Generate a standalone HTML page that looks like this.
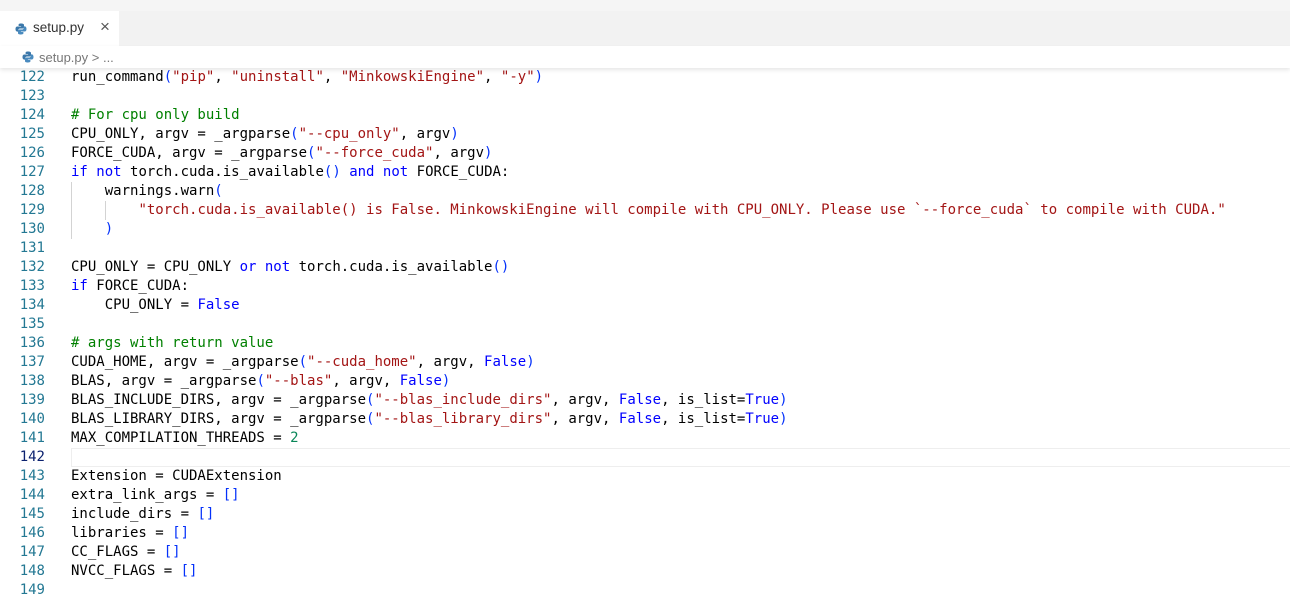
<!DOCTYPE html>
<html><head><meta charset="utf-8">
<style>
body{margin:0;width:1290px;height:590px;overflow:hidden;background:#fff;font-family:"Liberation Sans",sans-serif;position:relative}
#top{position:absolute;left:0;top:0;width:1290px;height:11px;background:#f5f5f5}
#tabs{position:absolute;left:0;top:11px;width:1290px;height:35px;background:#f2f2f2}
#tab{position:absolute;left:0;top:0;width:119px;height:35px;background:#fff}
#tab .name{position:absolute;left:33px;top:9px;font-size:13.5px;color:#333}
#tab .x{position:absolute;left:100px;top:6px;font-size:17px;color:#555;font-weight:300}
#bc{position:absolute;left:0;top:46px;width:1290px;height:22px;background:#fff;box-shadow:0 2px 4px rgba(0,0,0,.10);z-index:2}
#bc .name{position:absolute;left:39px;top:4px;font-size:13px;color:#777}
.py{position:absolute;width:12px;height:12px}
#code{position:absolute;left:0;top:68px;font-family:"DejaVu Sans Mono",monospace;font-size:14px;white-space:normal}
.l{height:19px;line-height:19px;position:relative}
.n{display:inline-block;width:45px;text-align:right;color:#237893}
.t{position:absolute;left:71px;top:0;color:#000;white-space:pre}
.k{color:#0000ff}.s{color:#a31515}.c{color:#008000}.d{color:#098658}.b{color:#0431fa}
.cur{position:absolute;left:71px;top:0;width:1219px;height:17px;border:1px solid #eeeeee;box-sizing:content-box}
.g{position:absolute;top:0;width:1px;height:19px;background:#d3d3d3}
</style></head><body>
<div id="top"></div>
<div id="tabs"><div id="tab">
<svg class="py" style="left:15px;top:12px" viewBox="0 0 12 12"><path d="M6 0.5C3.5 0.5 3.6 1.6 3.6 1.6V3h2.5v.5H2.5S.5 3.3.5 6s1.8 2.6 1.8 2.6h1V7.3S3.2 5.5 5 5.5h2.5S9 5.5 9 4V1.9S9.2.5 6 .5z" fill="#3c78aa"/><path d="M6 11.5c2.5 0 2.4-1.1 2.4-1.1V9H5.9v-.5h3.6s2 .2 2-2.5-1.8-2.6-1.8-2.6h-1v1.3S8.8 6.5 7 6.5H4.5S3 6.5 3 8v2.1s-.2 1.4 3 1.4z" fill="#4a8bbf"/></svg>
<span class="name">setup.py</span><span class="x">×</span></div></div>
<div id="bc">
<svg class="py" style="left:22px;top:5px" viewBox="0 0 12 12"><path d="M6 0.5C3.5 0.5 3.6 1.6 3.6 1.6V3h2.5v.5H2.5S.5 3.3.5 6s1.8 2.6 1.8 2.6h1V7.3S3.2 5.5 5 5.5h2.5S9 5.5 9 4V1.9S9.2.5 6 .5z" fill="#3c78aa"/><path d="M6 11.5c2.5 0 2.4-1.1 2.4-1.1V9H5.9v-.5h3.6s2 .2 2-2.5-1.8-2.6-1.8-2.6h-1v1.3S8.8 6.5 7 6.5H4.5S3 6.5 3 8v2.1s-.2 1.4 3 1.4z" fill="#4a8bbf"/></svg>
<span class="name">setup.py &gt; ...</span></div>
<div id="code">
<div class="l"><span class="n">122</span><span class="t">run_command<span class="b">(</span><span class="s">"pip"</span>, <span class="s">"uninstall"</span>, <span class="s">"MinkowskiEngine"</span>, <span class="s">"-y"</span><span class="b">)</span></span></div>
<div class="l"><span class="n">123</span></div>
<div class="l"><span class="n">124</span><span class="t c"># For cpu only build</span></div>
<div class="l"><span class="n">125</span><span class="t">CPU_ONLY, argv = _argparse<span class="b">(</span><span class="s">"--cpu_only"</span>, argv<span class="b">)</span></span></div>
<div class="l"><span class="n">126</span><span class="t">FORCE_CUDA, argv = _argparse<span class="b">(</span><span class="s">"--force_cuda"</span>, argv<span class="b">)</span></span></div>
<div class="l"><span class="n">127</span><span class="t"><span class="k">if</span> <span class="k">not</span> torch.cuda.is_available<span class="b">()</span> <span class="k">and</span> <span class="k">not</span> FORCE_CUDA:</span></div>
<div class="l"><span class="n">128</span><span class="g" style="left:71px"></span><span class="t">    warnings.warn<span class="b">(</span></span></div>
<div class="l"><span class="n">129</span><span class="g" style="left:71px"></span><span class="g" style="left:105px"></span><span class="t">        <span class="s">"torch.cuda.is_available() is False. MinkowskiEngine will compile with CPU_ONLY. Please use `--force_cuda` to compile with CUDA."</span></span></div>
<div class="l"><span class="n">130</span><span class="g" style="left:71px"></span><span class="t">    <span class="b">)</span></span></div>
<div class="l"><span class="n">131</span></div>
<div class="l"><span class="n">132</span><span class="t">CPU_ONLY = CPU_ONLY <span class="k">or</span> <span class="k">not</span> torch.cuda.is_available<span class="b">()</span></span></div>
<div class="l"><span class="n">133</span><span class="t"><span class="k">if</span> FORCE_CUDA:</span></div>
<div class="l"><span class="n">134</span><span class="t">    CPU_ONLY = <span class="k">False</span></span></div>
<div class="l"><span class="n">135</span></div>
<div class="l"><span class="n">136</span><span class="t c"># args with return value</span></div>
<div class="l"><span class="n">137</span><span class="t">CUDA_HOME, argv = _argparse<span class="b">(</span><span class="s">"--cuda_home"</span>, argv, <span class="k">False</span><span class="b">)</span></span></div>
<div class="l"><span class="n">138</span><span class="t">BLAS, argv = _argparse<span class="b">(</span><span class="s">"--blas"</span>, argv, <span class="k">False</span><span class="b">)</span></span></div>
<div class="l"><span class="n">139</span><span class="t">BLAS_INCLUDE_DIRS, argv = _argparse<span class="b">(</span><span class="s">"--blas_include_dirs"</span>, argv, <span class="k">False</span>, is_list=<span class="k">True</span><span class="b">)</span></span></div>
<div class="l"><span class="n">140</span><span class="t">BLAS_LIBRARY_DIRS, argv = _argparse<span class="b">(</span><span class="s">"--blas_library_dirs"</span>, argv, <span class="k">False</span>, is_list=<span class="k">True</span><span class="b">)</span></span></div>
<div class="l"><span class="n">141</span><span class="t">MAX_COMPILATION_THREADS = <span class="d">2</span></span></div>
<div class="l"><span class="n" style="color:#0b216f">142</span><span class="cur"></span></div>
<div class="l"><span class="n">143</span><span class="t">Extension = CUDAExtension</span></div>
<div class="l"><span class="n">144</span><span class="t">extra_link_args = <span class="b">[]</span></span></div>
<div class="l"><span class="n">145</span><span class="t">include_dirs = <span class="b">[]</span></span></div>
<div class="l"><span class="n">146</span><span class="t">libraries = <span class="b">[]</span></span></div>
<div class="l"><span class="n">147</span><span class="t">CC_FLAGS = <span class="b">[]</span></span></div>
<div class="l"><span class="n">148</span><span class="t">NVCC_FLAGS = <span class="b">[]</span></span></div>
<div class="l"><span class="n">149</span></div>
</div>
</body></html>
